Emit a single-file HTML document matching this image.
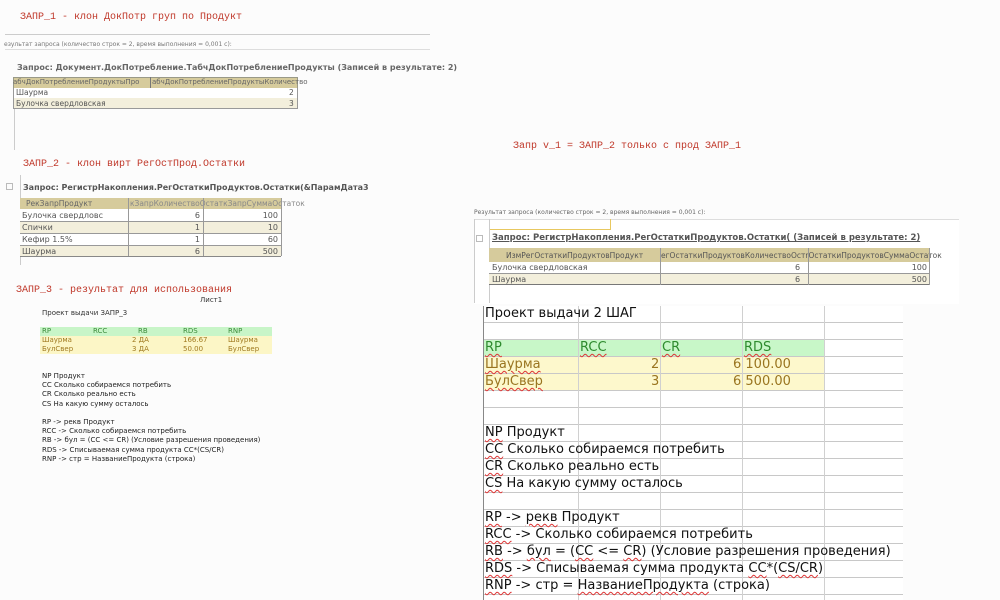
<!DOCTYPE html>
<html><head><meta charset="utf-8"><style>
body{margin:0;width:1000px;height:600px;background:#fcfcfc;position:relative;overflow:hidden;font-family:"Liberation Sans","DejaVu Sans",sans-serif;}
.a{position:absolute;white-space:nowrap;}
.red{color:#c0392b;font-family:"Liberation Mono","DejaVu Sans Mono",monospace;font-size:10px;}
.q{font-family:"DejaVu Sans",sans-serif;color:#555;}
.hl{position:absolute;height:1px;background:#bbb;}
.vl{position:absolute;width:1px;background:#bbb;}
.g{font-family:"DejaVu Sans",sans-serif;font-size:13px;color:#111;}
.u{text-decoration:underline wavy #d33;text-decoration-thickness:1px;text-underline-offset:2px;}
</style></head><body>

<!-- ZAPR 1 -->
<div class="a red" style="left:20px;top:12px;">ЗАПР_1 - клон ДокПотр груп по Продукт</div>
<div class="hl" style="left:5px;top:34px;width:425px;background:#ccc"></div>
<div class="a q" style="left:4px;top:41px;font-size:6px;color:#777">езультат запроса (количество строк = 2, время выполнения = 0,001 с):</div>
<div class="hl" style="left:5px;top:49px;width:425px;background:#ddd"></div>
<div class="vl" style="left:14px;top:80px;height:70px;background:#ccc"></div>
<div class="a q" style="left:17px;top:63px;font-size:8px;font-weight:bold;color:#666">Запрос: Документ.ДокПотребление.ТабчДокПотреблениеПродукты (Записей в результате: 2)</div>
<div class="a" style="left:13px;top:77px;width:283px;height:10px;background:#d6cb9c;border:1px solid #998"></div>
<div class="vl" style="left:150px;top:77px;height:32px;background:#777"></div>
<div class="a q" style="left:13px;top:78px;font-size:7px;color:#666">абчДокПотреблениеПродуктыПро</div>
<div class="a q" style="left:152px;top:78px;font-size:7px;color:#666">абчДокПотреблениеПродуктыКоличество</div>
<div class="a" style="left:13px;top:88px;width:283px;height:10px;border:1px solid #999;border-top:none;background:#fff"></div>
<div class="a" style="left:13px;top:98px;width:283px;height:10px;border:1px solid #999;border-top:none;background:#f3efdc"></div>
<div class="a q" style="left:16px;top:88px;font-size:7.5px">Шаурма</div>
<div class="a q" style="left:16px;top:99px;font-size:7.5px">Булочка свердловская</div>
<div class="a q" style="left:289px;top:88px;font-size:7.5px">2</div>
<div class="a q" style="left:289px;top:99px;font-size:7.5px">3</div>

<!-- ZAPR 2 -->
<div class="a red" style="left:23px;top:159px;">ЗАПР_2 - клон вирт РегОстПрод.Остатки</div>
<div class="vl" style="left:20px;top:175px;height:90px;background:#ccc"></div>
<div class="a" style="left:6px;top:183px;width:5px;height:5px;border:1px solid #bbb"></div>
<div class="a q" style="left:23px;top:183px;font-size:8px;font-weight:bold;color:#555">Запрос: РегистрНакопления.РегОстаткиПродуктов.Остатки(&amp;ПарамДата3</div>
<div class="a" style="left:20px;top:198px;width:261px;height:11px;background:#d6cb9c"></div>
<div class="a q" style="left:26px;top:199px;font-size:7.5px;color:#666">РекЗапрПродукт</div>
<div class="a q" style="left:130px;top:199px;font-size:7.5px;color:#888">кЗапрКоличествоОстаткЗапрСуммаОстаток</div>
<div class="a" style="left:20px;top:209px;width:261px;height:47px;border-bottom:1px solid #888;background:linear-gradient(#fff 0 12px,#f3efdc 12px 24px,#fff 24px 36px,#f3efdc 36px)"></div>
<div class="hl" style="left:20px;top:221px;width:261px;background:#999"></div>
<div class="hl" style="left:20px;top:233px;width:261px;background:#999"></div>
<div class="hl" style="left:20px;top:245px;width:261px;background:#999"></div>
<div class="vl" style="left:128px;top:198px;height:58px;background:#999"></div>
<div class="vl" style="left:203px;top:198px;height:58px;background:#999"></div>
<div class="vl" style="left:281px;top:198px;height:58px;background:#999"></div>
<div class="a q" style="left:22px;top:210px;font-size:8px;line-height:12px;">Булочка свердловс<br>Спички<br>Кефир 1.5%<br>Шаурма</div>
<div class="a q" style="left:190px;top:210px;font-size:8px;line-height:12px;text-align:right;width:10px">6<br>1<br>1<br>6</div>
<div class="a q" style="left:250px;top:210px;font-size:8px;line-height:12px;text-align:right;width:28px">100<br>10<br>60<br>500</div>

<!-- ZAPR 3 -->
<div class="a red" style="left:16px;top:285px;">ЗАПР_3 - результат для использования</div>
<div class="a q" style="left:200px;top:296px;font-size:7px;color:#333">Лист1</div>
<div class="a q" style="left:42px;top:309px;font-size:7px;color:#333">Проект выдачи ЗАПР_3</div>
<div class="a" style="left:40px;top:327px;width:232px;height:9px;background:#c8f5c8"></div>
<div class="a" style="left:40px;top:336px;width:232px;height:18px;background:#fcf6c6"></div>
<div class="a q" style="left:42px;top:327px;font-size:7px;color:#3a8a3a">RP</div>
<div class="a q" style="left:93px;top:327px;font-size:7px;color:#3a8a3a">RCC</div>
<div class="a q" style="left:138px;top:327px;font-size:7px;color:#3a8a3a">RB</div>
<div class="a q" style="left:183px;top:327px;font-size:7px;color:#3a8a3a">RDS</div>
<div class="a q" style="left:228px;top:327px;font-size:7px;color:#3a8a3a">RNP</div>
<div class="a q" style="left:42px;top:336px;font-size:7px;line-height:9px;color:#a07a20">Шаурма<br>БулСвер</div>
<div class="a q" style="left:132px;top:336px;font-size:7px;line-height:9px;color:#a07a20">2 ДА<br>3 ДА</div>
<div class="a q" style="left:183px;top:336px;font-size:7px;line-height:9px;color:#a07a20">166.67<br>50.00</div>
<div class="a q" style="left:228px;top:336px;font-size:7px;line-height:9px;color:#a07a20">Шаурма<br>БулСвер</div>
<div class="a q" style="left:42px;top:372px;font-size:7px;line-height:9.2px;color:#222">NP Продукт<br>CC Сколько собираемся потребить<br>CR Сколько реально есть<br>CS На какую сумму осталось<br><br>RP -&gt; рекв Продукт<br>RCC -&gt; Сколько собираемся потребить<br>RB -&gt; бул = (CC &lt;= CR) (Условие разрешения проведения)<br>RDS -&gt; Списываемая сумма продукта CC*(CS/CR)<br>RNP -&gt; стр = НазваниеПродукта (строка)</div>

<!-- Zapr v_1 -->
<div class="a red" style="left:513px;top:141px;">Запр v_1 = ЗАПР_2 только с прод ЗАПР_1</div>
<div class="a q" style="left:474px;top:209px;font-size:6px;color:#666">Результат запроса (количество строк = 2, время выполнения = 0,001 с):</div>
<div class="a" style="left:474px;top:219px;width:485px;height:84px;background:#fff;border-top:1px solid #ddd"></div>
<div class="vl" style="left:474px;top:219px;height:84px;background:#ccc"></div>
<div class="vl" style="left:489px;top:219px;height:84px;background:#ccc"></div>
<div class="a" style="left:490px;top:219px;width:120px;height:10px;border-right:1px solid #e8c860;border-bottom:1px solid #e8c860"></div>
<div class="a" style="left:476px;top:235px;width:5px;height:5px;border:1px solid #bbb"></div>
<div class="a q" style="left:492px;top:233px;font-size:8.5px;font-weight:bold;color:#555;text-decoration:underline">Запрос: РегистрНакопления.РегОстаткиПродуктов.Остатки( (Записей в результате: 2)</div>
<div class="a" style="left:489px;top:248px;width:440px;height:14px;background:#d6cb9c"></div>
<div class="a q" style="left:506px;top:251px;font-size:7.5px;color:#555">ИзмРегОстаткиПродуктовПродукт</div>
<div class="a q" style="left:661px;top:251px;font-size:7.5px;color:#555">егОстаткиПродуктовКоличествоОстrОстаткиПродуктовСуммаОстаток</div>
<div class="a" style="left:489px;top:262px;width:440px;height:11px;background:#fff;border-bottom:1px solid #999"></div>
<div class="a" style="left:489px;top:274px;width:440px;height:10px;background:#f3efdc;border-bottom:1px solid #777"></div>
<div class="vl" style="left:660px;top:248px;height:37px;background:#999"></div>
<div class="vl" style="left:808px;top:248px;height:37px;background:#999"></div>
<div class="vl" style="left:929px;top:248px;height:37px;background:#999"></div>
<div class="a q" style="left:492px;top:262px;font-size:8px;line-height:12px">Булочка свердловская<br>Шаурма</div>
<div class="a q" style="left:795px;top:262px;font-size:8px;line-height:12px">6<br>6</div>
<div class="a q" style="left:900px;top:262px;font-size:8px;line-height:12px;width:27px;text-align:right">100<br>500</div>

<!-- Spreadsheet -->
<div class="a" style="left:483px;top:306px;width:420px;height:294px;background:#fff"></div>
<div class="a" style="left:483px;top:339px;width:341px;height:17px;background:#c8f7c8"></div>
<div class="a" style="left:483px;top:356px;width:341px;height:34px;background:#fdf8cc"></div>
<div class="a" style="left:483px;top:306px;width:420px;height:294px;background:repeating-linear-gradient(to bottom,transparent 0 16px,#c8c8c8 16px 17px)"></div>
<div class="vl" style="left:483px;top:306px;height:294px;background:#888"></div>
<div class="vl" style="left:578px;top:306px;height:294px;background:#d0d0d0"></div>
<div class="vl" style="left:660px;top:306px;height:294px;background:#d0d0d0"></div>
<div class="vl" style="left:742px;top:306px;height:294px;background:#d0d0d0"></div>
<div class="vl" style="left:824px;top:306px;height:294px;background:#d0d0d0"></div>
<div class="a g" style="left:485px;top:306px;">Проект выдачи 2 ШАГ</div>
<div class="a g" style="left:485px;top:340px;color:#2e8b2e"><span class="u">RP</span></div>
<div class="a g" style="left:580px;top:340px;color:#2e8b2e"><span class="u">RCC</span></div>
<div class="a g" style="left:662px;top:340px;color:#2e8b2e"><span class="u">CR</span></div>
<div class="a g" style="left:744px;top:340px;color:#2e8b2e"><span class="u">RDS</span></div>
<div class="a g" style="left:485px;top:356px;color:#9a7520;line-height:17px"><span class="u">Шаурма</span><br><span class="u">БулСвер</span></div>
<div class="a g" style="left:651px;top:356px;color:#9a7520;line-height:17px">2<br>3</div>
<div class="a g" style="left:733px;top:356px;color:#9a7520;line-height:17px">6 100.00<br>6 500.00</div>
<div class="a g" style="left:485px;top:424px;line-height:17px"><span class="u">NP</span> Продукт<br><span class="u">CC</span> Сколько собираемся потребить<br><span class="u">CR</span> Сколько реально есть<br><span class="u">CS</span> На какую сумму осталось<br><br><span class="u">RP</span> -&gt; <span class="u">рекв</span> Продукт<br><span class="u">RCC</span> -&gt; Сколько собираемся потребить<br><span class="u">RB</span> -&gt; <span class="u">бул</span> = (<span class="u">CC</span> &lt;= <span class="u">CR</span>) (Условие разрешения проведения)<br><span class="u">RDS</span> -&gt; Списываемая сумма продукта <span class="u">CC</span>*(<span class="u">CS/CR</span>)<br><span class="u">RNP</span> -&gt; стр = <span class="u">НазваниеПродукта</span> (строка)</div>
</body></html>
